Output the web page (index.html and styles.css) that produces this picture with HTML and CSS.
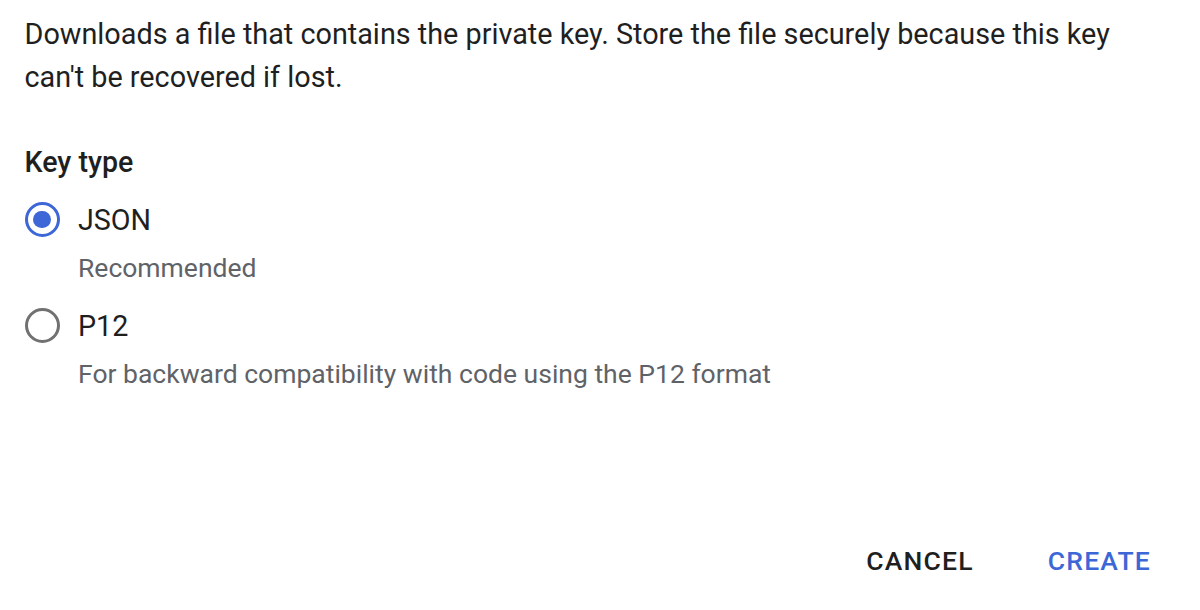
FILE: index.html
```html
<!DOCTYPE html>
<html lang="en">
<head>
<meta charset="utf-8">
<title>Create private key</title>
<link rel="stylesheet" href="styles.css">
</head>
<body>
<div class="dialog">
  <div class="content">
    <p class="desc">Downloads a file that contains the private key. Store the file securely because this key can't be recovered if lost.</p>
    <div class="label">Key type</div>
    <div class="option">
      <div class="row">
        <span class="radio checked"><span class="dot"></span></span>
        <span class="opt-label">JSON</span>
      </div>
      <div class="hint">Recommended</div>
    </div>
    <div class="option">
      <div class="row">
        <span class="radio"></span>
        <span class="opt-label">P12</span>
      </div>
      <div class="hint">For backward compatibility with code using the P12 format</div>
    </div>
  </div>
  <div class="actions">
    <button class="btn cancel">CANCEL</button>
    <button class="btn create">CREATE</button>
  </div>
</div>
</body>
</html>
```

FILE: styles.css
```css
html, body {
  margin: 0;
  padding: 0;
  background: #ffffff;
}
body {
  font-family: Roboto, "Liberation Sans", Arial, sans-serif;
  color: #1f1f1f;
}
.dialog {
  height: 610px;
  box-sizing: border-box;
  display: flex;
  flex-direction: column;
  padding: 13px 0 28px 24.5px;
}
.content {
  padding-right: 70px;
}
.desc {
  margin: 0;
  font-size: 28.8px;
  line-height: 43px;
}
.label {
  margin-top: 42px;
  margin-bottom: 1px;
  font-size: 28.6px;
  font-weight: 500;
  line-height: 42px;
}
.option {
  margin-top: 15.5px;
}
.row {
  display: flex;
  align-items: center;
  height: 42px;
}
.radio {
  width: 35px;
  height: 35px;
  box-sizing: border-box;
  border: 3.5px solid #717171;
  border-radius: 50%;
  display: flex;
  align-items: center;
  justify-content: center;
  flex: none;
}
.radio.checked {
  border-color: #3d67d6;
}
.dot {
  width: 17.5px;
  height: 17.5px;
  border-radius: 50%;
  background: #3d67d6;
}
.opt-label {
  margin-left: 18.5px;
  font-size: 28.7px;
  line-height: 42px;
  color: #1f1f1f;
}
.hint {
  margin-top: 6.5px;
  margin-left: 53.5px;
  font-size: 26.5px;
  line-height: 42px;
  color: #5f6368;
}
.actions {
  margin-top: auto;
  display: flex;
  justify-content: flex-end;
  gap: 46px;
  padding-right: 35px;
}
.btn {
  font-family: Roboto, "Liberation Sans", Arial, sans-serif;
  font-size: 26.5px;
  font-weight: 500;
  letter-spacing: 1.2px;
  line-height: 42px;
  padding: 0 14px;
  border: none;
  background: none;
}
.cancel {
  color: #1f1f1f;
}
.create {
  color: #3d67d6;
}
```
